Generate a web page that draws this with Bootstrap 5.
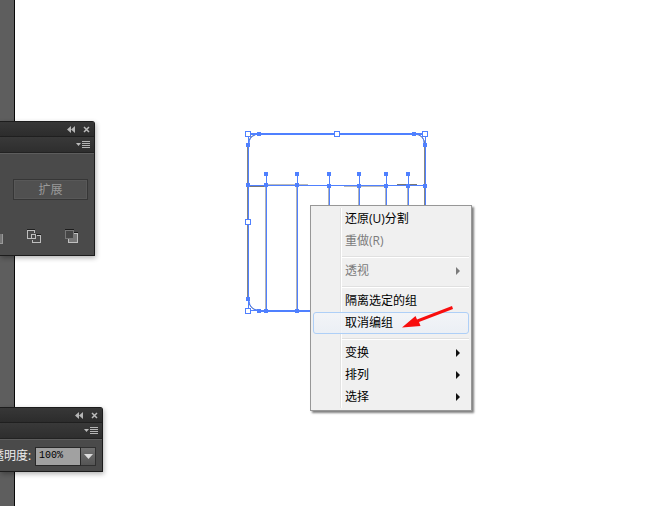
<!DOCTYPE html>
<html lang="zh-CN">
<head>
<meta charset="utf-8">
<meta name="viewport" content="width=device-width, initial-scale=1">
<title>路径查找器</title>
<link href="https://cdn.jsdelivr.net/npm/bootstrap@5.3.0/dist/css/bootstrap.min.css" rel="stylesheet">
<style>
body{font:12px/22px "Open Sans","Noto Sans CJK SC",sans-serif;background:#fff;color:#000}
.dock{width:15px;background:#5e5e5e;border-right:1px solid #080808}
.artwork{left:240px;top:126px}
.tool-panel{left:0;background:#4a4a4a;border:1px solid #1c1c1c;border-width:1px 1px 1px 0;border-radius:0 3px 0 0;box-shadow:1px 2px 5px rgba(0,0,0,.3);color:#ddd}
.pathfinder{top:121px;width:95px}
.transparency{top:407px;width:103px}
.panel-title{height:14px;background:linear-gradient(#373737,#2c2c2c);padding-right:4px;gap:7px}
.panel-tabs{height:17px;background:linear-gradient(#393939,#2e2e2e);border-top:1px solid #1f1f1f;border-bottom:1px solid #222;padding-right:3px}
.panel-body{border-top:1px solid #5d5d5d}
.plain{padding:0;border:0;background:none;display:flex;line-height:1}
.expand{height:21px;margin:25px 6px 0 13px;border:1px solid #363636;background:#505050;color:#999;line-height:16px;box-shadow:inset 0 0 0 1px #585858;padding:0}
.modes{margin:29px 15px 0 0;padding-bottom:10px}
.opacity-row{padding:7px 6px 5px 0}
.opacity-row label{margin-left:-8px;width:43px;color:#eee;line-height:18px;white-space:nowrap}
.value{width:46px;height:19px;border:1px solid #282828;background:#a1a1a1;color:#000;font:10px/14px "Liberation Mono",monospace;padding:0 0 2px 3px;border-radius:0}
.drop{width:16px;height:19px;background:linear-gradient(#707070,#555);border:1px solid #303030;border-left:0;align-items:center;justify-content:center}
.context{left:310px;top:205px;width:162px;padding:2px;background:#f0f0f0;border:1px solid #979797;box-shadow:2px 2px 2px rgba(0,0,0,.5);z-index:3}
.context::before{content:"";position:absolute;top:2px;bottom:2px;left:29px;border-left:1px solid #e2e2e2;border-right:1px solid #fff}
.entry{position:relative;display:flex;align-items:center;justify-content:space-between;width:100%;height:22px;padding:0 8px 0 31px;border:1px solid transparent;border-radius:3px;background:none;color:#000;text-align:left;line-height:18px}
.entry:disabled{color:#7b7b7b}
.entry.chosen{border-color:#aecff7;background:linear-gradient(rgba(243,245,249,.8),rgba(234,239,246,.8))}
.rule{height:8px;margin:0 0 0 28px;padding-top:4px}
.rule::before{content:"";display:block;height:2px;background:#e0e0e0;border-bottom:1px solid #fff}
.pointer{left:400px;top:304px;z-index:4;pointer-events:none}
</style>
<script src="https://cdn.jsdelivr.net/npm/bootstrap@5.3.0/dist/js/bootstrap.bundle.min.js"></script>
</head>
<body>
<main class="position-relative d-flex vh-100 overflow-hidden">
  <aside class="dock flex-shrink-0"></aside>
  <div class="flex-fill bg-white"></div>

  <svg class="artwork position-absolute" width="196" height="194" viewBox="240 126 196 194" fill="none" shape-rendering="crispEdges" aria-hidden="true">
    <g stroke="#b4b4b4"><path d="M265.500 186V310M296.500 186V310M328.500 186V310M358.500 186V310M385.500 186V310M407.500 186V310"/></g>
    <path d="M247.500 145V299M424.500 145V300" stroke="#858585"/>
    <path d="M250 186.500H266M397 184.500H417" stroke="#777"/>
    <path d="M266 184.500H308M344 186.500H386" stroke="#b9b9b9"/>
    <g shape-rendering="auto"><path d="M248 146Q248 134 260 134M413 134Q425 134 425 146M248 299Q249 310 260 311" stroke="#777"/><path d="M249 144Q249 137 255 135M417 134Q424 136 424 143M249 301Q250 309 257 310" stroke="#4f80ff"/></g>
    <path d="M248 134H425M259 311H425" stroke="#4f80ff" stroke-width="2"/>
    <path d="M248.500 134V311M248 185.500H425M248 310.500H260M425.500 134V310" stroke="#4f80ff"/>
    <path d="M266.500 174V311M297.500 174V311M329.500 174V311M359.500 174V311M386.500 174V311M408.500 174V311" stroke="#4f80ff"/>
    <g fill="#4f80ff">
      <path d="M257 132h4v4h-4zM412 132h4v4h-4zM246 143h4v4h-4zM423 143h4v4h-4zM246 183h4v4h-4zM423 184h4v4h-4zM246 297h4v4h-4zM257 309h4v4h-4zM264 309h4v4h-4zM295 309h4v4h-4z"/>
      <path d="M264 172h4v4h-4zM295 172h4v4h-4zM327 172h4v4h-4zM357 172h4v4h-4zM384 172h4v4h-4zM406 172h4v4h-4zM264 183h4v4h-4zM295 183h4v4h-4zM327 184h4v4h-4zM357 184h4v4h-4zM384 184h4v4h-4zM406 184h4v4h-4z"/>
    </g>
    <path d="M245.500 131.500h5v5h-5zM334.500 131.500h5v5h-5zM422.500 131.500h5v5h-5zM245.500 219.500h5v5h-5zM245.500 308.500h5v5h-5z" fill="#fff" stroke="#4f80ff"/>
  </svg>

  <section class="tool-panel pathfinder position-absolute" aria-label="路径查找器">
    <div class="panel-title d-flex align-items-center justify-content-end">
      <button class="plain" type="button" aria-label="折叠"><svg width="9" height="7"><path d="M4 0v7L0 3.500zM8 0v7L4 3.500z" fill="#b5b5b5"/></svg></button>
      <button class="plain" type="button" aria-label="关闭"><svg width="7" height="7"><path d="M1 1l5 5M6 1L1 6" stroke="#bbb" stroke-width="1.500"/></svg></button>
    </div>
    <div class="panel-tabs d-flex align-items-center justify-content-end">
      <button class="plain" type="button" aria-label="面板菜单"><svg width="15" height="9"><path d="M0 3h5L2.500 6z" fill="#bbb"/><path d="M6 1.500h8M6 3.500h8M6 5.500h8M6 7.500h8" stroke="#b5b5b5" shape-rendering="crispEdges"/></svg></button>
    </div>
    <div class="panel-body d-flex flex-column">
      <button class="expand" type="button" disabled>扩展</button>
      <div class="modes d-flex justify-content-between">
        <button class="plain" type="button" aria-label="差集"><svg width="3" height="16" shape-rendering="crispEdges"><path d="M0 5h3v9H0z" fill="#777"/><path d="M0 14.500h3M2.500 5v10" stroke="#999"/></svg></button>
        <button class="plain ms-2" type="button" aria-label="交集"><svg width="15" height="16" fill="none" shape-rendering="crispEdges"><path d="M0 .500h8M9 5.500h5" stroke="#202020"/><path d="M4 9.500H.500v-8h7V4M10 6.500h3.500v7h-8V11M4.500 5.500h4v4h-4z" stroke="#bebebe"/></svg></button>
        <button class="plain ms-2" type="button" aria-label="减去后方对象"><svg width="14" height="16" shape-rendering="crispEdges"><path d="M0 .500h9M9 3.500h4" stroke="#1c1c1c"/><path d="M3.500 4.500h9v9h-9z" fill="#777" stroke="#c0c0c0"/><path d="M.500 1.500h8v8h-8z" fill="#464646" stroke="#777"/></svg></button>
      </div>
    </div>
  </section>

  <section class="tool-panel transparency position-absolute" aria-label="透明度">
    <div class="panel-title d-flex align-items-center justify-content-end">
      <button class="plain" type="button" aria-label="折叠"><svg width="9" height="7"><path d="M4 0v7L0 3.500zM8 0v7L4 3.500z" fill="#b5b5b5"/></svg></button>
      <button class="plain" type="button" aria-label="关闭"><svg width="7" height="7"><path d="M1 1l5 5M6 1L1 6" stroke="#bbb" stroke-width="1.500"/></svg></button>
    </div>
    <div class="panel-tabs d-flex align-items-center justify-content-end">
      <button class="plain" type="button" aria-label="面板菜单"><svg width="15" height="9"><path d="M0 3h5L2.500 6z" fill="#bbb"/><path d="M6 1.500h8M6 3.500h8M6 5.500h8M6 7.500h8" stroke="#b5b5b5" shape-rendering="crispEdges"/></svg></button>
    </div>
    <div class="panel-body opacity-row d-flex">
      <label for="opacity" class="flex-shrink-0">透明度:</label>
      <input id="opacity" class="value" type="text" value="100%">
      <button class="plain drop" type="button" aria-label="不透明度选项"><svg width="9" height="6"><path d="M0 0h9L4.500 5z" fill="#ddd"/></svg></button>
    </div>
  </section>

  <div class="context position-absolute" role="menu">
    <button class="entry" role="menuitem" type="button">还原(U)分割</button>
    <button class="entry" role="menuitem" type="button" disabled>重做(R)</button>
    <div class="rule" role="separator"></div>
    <button class="entry" role="menuitem" type="button" disabled>透视<svg width="4" height="8"><path d="M0 0v8l4-4z" fill="#7b7b7b"/></svg></button>
    <div class="rule" role="separator"></div>
    <button class="entry" role="menuitem" type="button">隔离选定的组</button>
    <button class="entry chosen" role="menuitem" type="button">取消编组</button>
    <div class="rule" role="separator"></div>
    <button class="entry" role="menuitem" type="button">变换<svg width="4" height="8"><path d="M0 0v8l4-4z" fill="#111"/></svg></button>
    <button class="entry" role="menuitem" type="button">排列<svg width="4" height="8"><path d="M0 0v8l4-4z" fill="#111"/></svg></button>
    <button class="entry" role="menuitem" type="button">选择<svg width="4" height="8"><path d="M0 0v8l4-4z" fill="#111"/></svg></button>
  </div>

  <svg class="pointer position-absolute" width="56" height="28" viewBox="400 304 56 28" aria-hidden="true"><path d="M402 327.500L415.500 316l1.500 3.500 35-13.500 1 3-34 13 1.500 4z" fill="#f80e0e"/></svg>
</main>
</body>
</html>
